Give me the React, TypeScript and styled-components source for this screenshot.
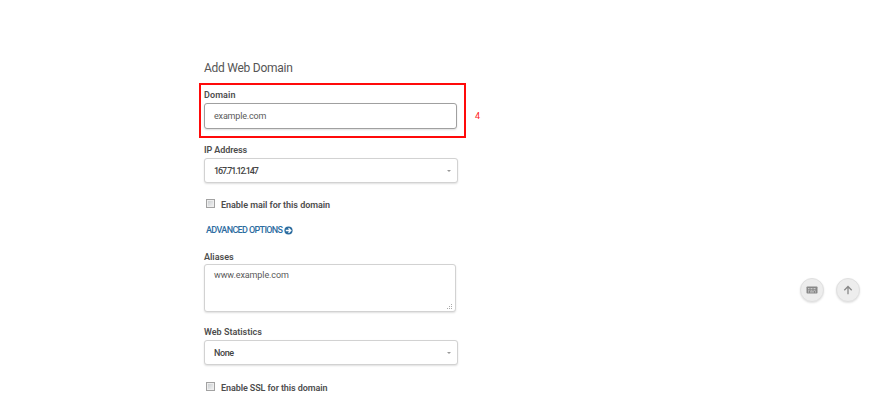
import React from "react";
import styled, { createGlobalStyle } from "styled-components";

const GlobalStyle = createGlobalStyle`
  * { box-sizing: border-box; }
  body { margin: 0; background: #fff; }
`;

const Page = styled.div`
  display: flex;
  justify-content: space-between;
  width: 895px;
  height: 408px;
  padding: 60px 35px 0 199px;
  overflow: hidden;
  background: #fff;
  color: #555;
  font: 9px/12px Roboto, "Open Sans", sans-serif;
`;

const Form = styled.main`
  display: flex;
  flex-direction: column;
  width: 290px;
`;

const Title = styled.h1`
  margin: 0 0 7px 5px;
  font-size: 12px;
  line-height: 16px;
  font-weight: 400;
  letter-spacing: -0.26px;
`;

const HighlightRow = styled.div`
  display: flex;
  align-items: center;
`;

const Highlight = styled.div`
  width: 267px;
  height: 55px;
  padding: 4px 0 0 3px;
  border: 2px solid #ff0a0a;
`;

const StepNumber = styled.span`
  margin: 10px 0 0 9px;
  color: #ff2020;
  font-size: 9px;
`;

const Field = styled.div<{ $top: number }>`
  margin: ${(p) => p.$top}px 0 0 5px;
`;

const Label = styled.label<{ $spacing?: number; $height?: number }>`
  display: block;
  height: ${(p) => p.$height ?? 14}px;
  color: #4d4d4d;
  font-weight: 600;
  white-space: nowrap;
  letter-spacing: ${(p) => p.$spacing ?? 0}px;
`;

const Control = styled.div<{ $width: number; $height: number; $focused?: boolean }>`
  display: flex;
  align-items: center;
  justify-content: space-between;
  width: ${(p) => p.$width}px;
  height: ${(p) => p.$height}px;
  padding: 0 6px 0 9px;
  border: 1px solid ${(p) => (p.$focused ? "#a0a0a0" : "#d2d2d2")};
  border-radius: 3px;
  box-shadow: 0 1px 2px rgba(0, 0, 0, 0.13);
  background: #fff;
`;

const TextArea = styled(Control)`
  align-items: stretch;
  padding: 4px 2px 1px 9px;
`;

const Value = styled.span<{ $spacing: number; $strong?: boolean }>`
  font-weight: ${(p) => (p.$strong ? 500 : 400)};
  color: ${(p) => (p.$strong ? "#444" : "#5a5a5a")};
  letter-spacing: ${(p) => p.$spacing}px;
`;

const Caret = styled.span`
  border: 2px solid transparent;
  border-top-color: #999;
  border-bottom: 0;
`;

const Grip = styled.svg`
  align-self: flex-end;
  width: 6px;
  height: 6px;
  fill: #aaa;
`;

const CheckRow = styled.div<{ $top: number }>`
  display: flex;
  align-items: flex-start;
  gap: 6px;
  height: 12px;
  margin: ${(p) => p.$top}px 0 0 7px;
`;

const Checkbox = styled.span`
  width: 9px;
  height: 9px;
  border: 1px solid #a2a2a2;
  box-shadow: inset 0 0 0 1px #eee;
  background: linear-gradient(135deg, #c6cacd, #f5f5f5);
`;

const Advanced = styled.a`
  display: flex;
  align-items: center;
  gap: 2px;
  height: 12px;
  margin: 13px 0 0 7px;
  color: #2c6c9f;
  font-weight: 500;
  letter-spacing: -0.64px;
`;

const Actions = styled.aside`
  display: flex;
  gap: 12px;
  padding-top: 218px;
`;

const RoundButton = styled.button`
  display: grid;
  place-items: center;
  width: 24px;
  height: 24px;
  padding: 0;
  border: 1px solid #e0e0e0;
  border-radius: 50%;
  background: #ededed;
  box-shadow: 0 1px 2px rgba(0, 0, 0, 0.12);
`;

const ResizeGrip = () => (
  <Grip viewBox="0 0 6 6">
    <path d="M4 0h1v1H4zM2 2h1v1H2zM4 2h1v1H4zM0 4h1v1H0zM2 4h1v1H2zM4 4h1v1H4z" />
  </Grip>
);

const ArrowCircle = () => (
  <svg width="9" height="9" viewBox="0 0 9 9">
    <circle cx="4.5" cy="4.5" r="4.1" fill="#2c6c9f" />
    <path d="M1.8 4.5h4.7M4.5 2.2l2.3 2.3-2.3 2.3" fill="none" stroke="#fff" strokeWidth="1.3" />
  </svg>
);

const KeyboardIcon = () => (
  <svg width="12" height="8" viewBox="0 0 12 8">
    <rect x=".5" y=".5" width="11" height="7" rx=".8" fill="#888" />
    <path d="M2 2.5h8M2 4.2h8" stroke="#d8d8d8" strokeWidth=".8" strokeDasharray="1 .5" />
    <path d="M2 5.9h1M4 5.9h4M9 5.9h1" stroke="#ddd" strokeWidth=".8" />
  </svg>
);

const UpIcon = () => (
  <svg width="10" height="10" viewBox="0 0 10 10" fill="none" stroke="#888" strokeWidth="1.3">
    <path d="M5 9.2V1.5M1.3 5.2L5 1.5l3.7 3.7" />
  </svg>
);

export default function App() {
  return (
    <>
      <GlobalStyle />
      <Page>
        <Form>
          <Title>Add Web Domain</Title>
          <HighlightRow>
            <Highlight>
              <Label $spacing={0.1}>Domain</Label>
              <Control $width={253} $height={26} $focused>
                <Value $spacing={-0.18}>example.com</Value>
              </Control>
            </Highlight>
            <StepNumber>4</StepNumber>
          </HighlightRow>
          <Field $top={6}>
            <Label $spacing={-0.1}>IP Address</Label>
            <Control $width={254} $height={25}>
              <Value $spacing={-1.15} $strong>167.71.12.147</Value>
              <Caret />
            </Control>
          </Field>
          <CheckRow $top={16}>
            <Checkbox />
            <Label $spacing={-0.04}>Enable mail for this domain</Label>
          </CheckRow>
          <Advanced>
            ADVANCED OPTIONS
            <ArrowCircle />
          </Advanced>
          <Field $top={15}>
            <Label $height={13}>Aliases</Label>
            <TextArea $width={252} $height={48}>
              <Value $spacing={-0.1}>www.example.com</Value>
              <ResizeGrip />
            </TextArea>
          </Field>
          <Field $top={14}>
            <Label>Web Statistics</Label>
            <Control $width={254} $height={25}>
              <Value $spacing={-0.4} $strong>None</Value>
              <Caret />
            </Control>
          </Field>
          <CheckRow $top={17}>
            <Checkbox />
            <Label $spacing={-0.09}>Enable SSL for this domain</Label>
          </CheckRow>
        </Form>
        <Actions>
          <RoundButton aria-label="Keyboard shortcuts"><KeyboardIcon /></RoundButton>
          <RoundButton aria-label="Back to top"><UpIcon /></RoundButton>
        </Actions>
      </Page>
    </>
  );
}
